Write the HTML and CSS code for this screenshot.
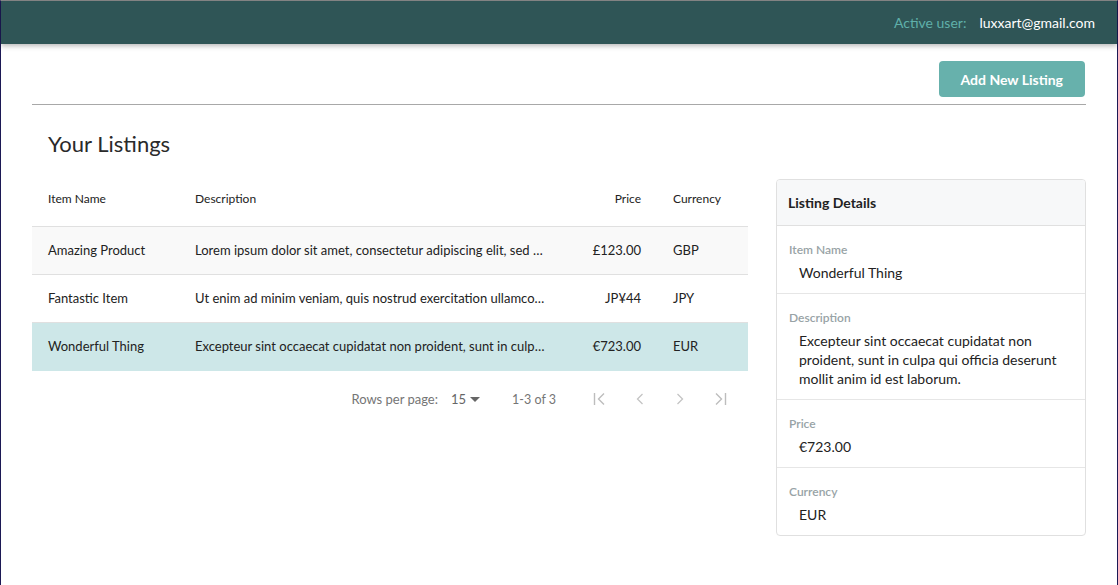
FILE: index.html
```html
<!DOCTYPE html>
<html lang="en">
<head>
<meta charset="utf-8">
<title>Your Listings</title>
<link rel="stylesheet" href="styles.css">
</head>
<body>
<div class="frame">
  <header class="topbar">
    <span class="user-label">Active user:</span>
    <span class="user-email">luxxart@gmail.com</span>
  </header>
  <main class="content">
    <div class="actions">
      <button class="btn-primary">Add New Listing</button>
    </div>
    <hr class="divider">
    <h1 class="title">Your Listings</h1>
    <div class="main-row">
      <section class="table-wrap">
        <table class="listings">
          <colgroup>
            <col class="c-name"><col class="c-desc"><col class="c-price"><col class="c-cur">
          </colgroup>
          <thead>
            <tr><th>Item Name</th><th>Description</th><th class="num">Price</th><th>Currency</th></tr>
          </thead>
          <tbody>
            <tr class="odd"><td>Amazing Product</td><td class="desc">Lorem ipsum dolor sit amet, consectetur adipiscing elit, sed do eiusmod tempor incididunt</td><td class="num">£123.00</td><td>GBP</td></tr>
            <tr><td>Fantastic Item</td><td class="desc">Ut enim ad minim veniam, quis nostrud exercitation ullamco laboris</td><td class="num">JP¥44</td><td>JPY</td></tr>
            <tr class="selected"><td>Wonderful Thing</td><td class="desc">Excepteur sint occaecat cupidatat non proident, sunt in culpa qui officia deserunt mollit anim id est laborum.</td><td class="num">€723.00</td><td>EUR</td></tr>
          </tbody>
        </table>
        <div class="pagination">
          <span class="rpp">Rows per page:</span>
          <span class="rpp-select">15 <svg class="caret" width="10" height="5" viewBox="0 0 10 5"><path d="M0 0h10L5 5z" fill="#666"/></svg></span>
          <span class="count">1-3 of 3</span>
          <span class="pg-btn"><svg width="16" height="16" viewBox="0 0 16 16"><path d="M2.5 2v12M12 2.5 6.5 8 12 13.5" fill="none" stroke="#bdbdbd" stroke-width="1.4"/></svg></span>
          <span class="pg-btn"><svg width="16" height="16" viewBox="0 0 16 16"><path d="M10.5 3 5.5 8l5 5" fill="none" stroke="#c4c4c4" stroke-width="1.3"/></svg></span>
          <span class="pg-btn"><svg width="16" height="16" viewBox="0 0 16 16"><path d="M5.5 3l5 5-5 5" fill="none" stroke="#c4c4c4" stroke-width="1.3"/></svg></span>
          <span class="pg-btn"><svg width="16" height="16" viewBox="0 0 16 16"><path d="M13.5 2v12M4 2.5 9.5 8 4 13.5" fill="none" stroke="#bdbdbd" stroke-width="1.4"/></svg></span>
        </div>
      </section>
      <aside class="details">
        <div class="details-head">Listing Details</div>
        <div class="field">
          <div class="field-label">Item Name</div>
          <div class="field-value">Wonderful Thing</div>
        </div>
        <div class="field">
          <div class="field-label">Description</div>
          <div class="field-value">Excepteur sint occaecat cupidatat non proident, sunt in culpa qui officia deserunt mollit anim id est laborum.</div>
        </div>
        <div class="field">
          <div class="field-label">Price</div>
          <div class="field-value">€723.00</div>
        </div>
        <div class="field">
          <div class="field-label">Currency</div>
          <div class="field-value">EUR</div>
        </div>
      </aside>
    </div>
  </main>
</div>
</body>
</html>
```
FILE: styles.css
```css
* { box-sizing: border-box; }
html, body { margin: 0; padding: 0; background: #fff; }
body {
  font-family: Lato, "Open Sans", Arial, sans-serif;
  color: #222;
  font-size: 14px;
}
.frame {
  min-height: 100vh;
  border-top: 1px solid #8a8a8a;
  border-left: 1px solid #1c1955;
  border-right: 1px solid #1c1955;
}
.topbar {
  height: 43px;
  background: #2f5556;
  display: flex;
  align-items: center;
  justify-content: flex-end;
  padding-right: 22px;
  box-shadow: 0 2px 5px rgba(0,0,0,0.28);
  position: relative;
  z-index: 1;
  font-size: 14px;
}
.user-label { color: #5fb0aa; margin-right: 13px; }
.user-email { color: #fff; }

.content { padding: 0 31px; }
.actions {
  display: flex;
  justify-content: flex-end;
  padding-top: 17px;
}
.btn-primary {
  height: 36px;
  padding: 0 22px;
  background: #67b1ac;
  color: #fff;
  border: 0;
  border-radius: 4px;
  font-family: Lato, Arial, sans-serif;
  font-weight: 700;
  font-size: 14px;
  margin-right: 1px;
}
.divider {
  margin: 7px 0 0;
  border: 0;
  border-top: 1px solid #a8a8a8;
  height: 0;
}
.title {
  margin: 25px 0 0;
  padding-left: 16px;
  font-size: 22px;
  line-height: 28px;
  font-weight: 400;
  color: #2a2a2a;
}
.main-row {
  display: flex;
  align-items: flex-start;
  gap: 28px;
  margin-top: 18px;
}
.table-wrap { width: 716px; flex: none; }
.listings {
  width: 100%;
  table-layout: fixed;
  border-collapse: separate;
  border-spacing: 0;
}
.c-name { width: 147px; }
.c-desc { width: 383px; }
.c-price { width: 95px; }
.c-cur { width: 91px; }
.listings th {
  font-weight: 400;
  font-size: 12px;
  line-height: 16px;
  padding: 15px 16px 19px;
  text-align: left;
  color: #222;
  border-bottom: 1px solid #e0e0e0;
}
.listings td {
  font-size: 13px;
  line-height: 19px;
  padding: 14px 16px;
  border-bottom: 1px solid #e0e0e0;
  white-space: nowrap;
  overflow: hidden;
  text-overflow: ellipsis;
  color: #222;
}
.listings .num { text-align: right; }
.listings tr.odd td { background: #f9f9f9; }
.listings tr.selected td { background: #cde7e8; border-bottom-color: #cde7e8; }

.pagination {
  height: 56px;
  display: flex;
  align-items: center;
  justify-content: flex-end;
  padding-right: 8px;
  font-size: 13px;
  color: #757575;
}
.rpp-select {
  margin-left: 13px;
  display: inline-flex;
  align-items: center;
  gap: 4px;
  color: #666;
}
.caret { margin-top: 1px; }
.count { margin-left: 32px; margin-right: 24px; font-size: 12.5px; }
.pg-btn {
  width: 40px;
  height: 40px;
  display: inline-flex;
  align-items: center;
  justify-content: center;
}

.details {
  flex: 1;
  margin-top: 3px;
  border: 1px solid #e0e0e0;
  border-radius: 4px;
  overflow: hidden;
}
.details-head {
  height: 46px;
  background: #f7f8f9;
  border-bottom: 1px solid #e0e0e0;
  display: flex;
  align-items: center;
  padding-left: 11px;
  font-weight: 700;
  font-size: 14px;
  color: #222;
}
.field {
  padding: 16px 12px 11px 12px;
  border-bottom: 1px solid #e6e6e6;
}
.field:last-child { border-bottom: 0; }
.field-label {
  font-size: 12px;
  line-height: 16px;
  font-weight: 600;
  color: #98a3a6;
}
.field-value {
  margin-top: 5px;
  padding-left: 10px;
  font-size: 14px;
  line-height: 19px;
  color: #222;
}
```
